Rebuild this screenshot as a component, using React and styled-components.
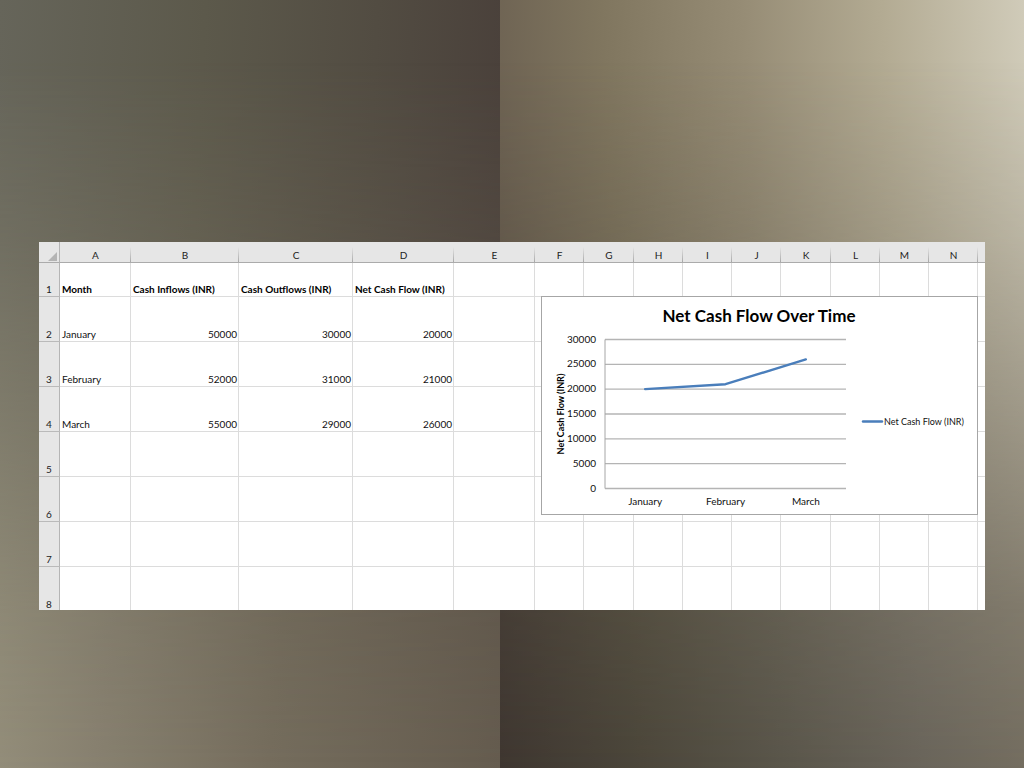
import React from "react";
import styled, { createGlobalStyle } from "styled-components";

const GlobalStyle = createGlobalStyle`
  body {
    margin: 0;
    font-family: Lato, "Liberation Sans", sans-serif;
  }
`;

const Page = styled.main`
  position: relative;
  isolation: isolate;
  box-sizing: border-box;
  min-height: 100vh;
  padding: 242px 39px 158px;
  background-image:
    linear-gradient(93deg, #66655a, #5c594b 38%, #524c42 70%, #483e39),
    linear-gradient(
      87deg,
      #695e50,
      #80765f 25%,
      #968c75 50%,
      #b3ab93 75%,
      #d0cbb9
    );
  background-size: 500px 100%, calc(100% - 500px) 100%;
  background-repeat: no-repeat;
  background-position: left top, right top;

  /* lower part of the backdrop, faded in over the upper one */
  &::before {
    content: "";
    position: absolute;
    inset: 0;
    z-index: -1;
    background-image:
      linear-gradient(96deg, #9c9781, #888170 30%, #756d5d 60%, #655c4f),
      linear-gradient(
        87deg,
        #3e3630,
        #4b463a 25%,
        #59554a 50%,
        #69645a 75%,
        #777061
      );
    background-size: 500px 100%, calc(100% - 500px) 100%;
    background-repeat: no-repeat;
    background-position: left top, right top;
    mask-image: linear-gradient(
      to bottom,
      transparent 8%,
      rgba(0, 0, 0, 0.22) 31%,
      rgba(0, 0, 0, 0.85) 79%,
      #000 100%
    );
  }
`;

const Sheet = styled.section`
  position: relative;
  overflow: hidden;
  background: #fff;
`;

const Grid = styled.table`
  width: 100%;
  table-layout: fixed;
  border-collapse: separate;
  border-spacing: 0;
  font-size: 10px;
  line-height: 12px;
`;

const Column = styled.col`
  width: ${({ $width }) => ($width ? `${$width}px` : "auto")};
`;

const ColumnHead = styled.th`
  box-sizing: border-box;
  height: 21px;
  padding: 6px 0 0;
  border-bottom: 1px solid #ababab;
  background: linear-gradient(to bottom, #e6e6e6 25%, #a8a8a8) right top / 1px
    100% no-repeat #e6e6e6;
  color: #222;
  font-weight: 400;
  text-align: center;

  &:last-child {
    background: #e6e6e6;
  }
`;

const Corner = styled.td`
  box-sizing: border-box;
  height: 21px;
  padding: 9px 2px 0 9px;
  border-right: 1px solid #b5b5b5;
  border-bottom: 1px solid #ababab;
  background: #e6e6e6;

  svg {
    display: block;
  }
`;

const Row = styled.tr`
  height: ${({ $height }) => $height}px;

  &:last-child > * {
    padding-bottom: 0;
    border-bottom: none;
  }
`;

const RowHead = styled.th`
  padding: 0 0 1px;
  border-right: 1px solid #b5b5b5;
  border-bottom: 1px solid #bababa;
  background: #e6e6e6;
  color: #222;
  font-weight: 400;
  text-align: center;
  vertical-align: bottom;
`;

const Cell = styled.td`
  padding: 0 1px 1px 2px;
  border-right: 1px solid #dcdcdc;
  border-bottom: 1px solid #dcdcdc;
  color: ${({ $bold }) => ($bold ? "#000" : "#111")};
  font-weight: ${({ $bold }) => ($bold ? 700 : 400)};
  text-align: ${({ $number }) => ($number ? "right" : "left")};
  vertical-align: bottom;
  white-space: nowrap;

  &:last-child {
    border-right: none;
  }
`;

const ChartBox = styled.figure`
  position: absolute;
  top: 54px;
  left: 502px;
  box-sizing: border-box;
  width: 437px;
  height: 219px;
  margin: 0;
  border: 1px solid #a6a6a6;
  background: #fff;

  svg {
    display: block;
  }
`;

const ChartText = styled.text`
  fill: ${({ $bold }) => ($bold ? "#000" : "#111")};
  font-size: ${({ $size }) => $size || 10}px;
  font-weight: ${({ $bold }) => ($bold ? 700 : 400)};
`;

const columns = [
  { name: "A", width: 71 },
  { name: "B", width: 108 },
  { name: "C", width: 114 },
  { name: "D", width: 101 },
  { name: "E", width: 81 },
  { name: "F", width: 49 },
  { name: "G", width: 50 },
  { name: "H", width: 49 },
  { name: "I", width: 49 },
  { name: "J", width: 49 },
  { name: "K", width: 50 },
  { name: "L", width: 49 },
  { name: "M", width: 49 },
  { name: "N", width: 49 },
  { name: "" },
];

const rows = [
  ["Month", "Cash Inflows (INR)", "Cash Outflows (INR)", "Net Cash Flow (INR)"],
  ["January", 50000, 30000, 20000],
  ["February", 52000, 31000, 21000],
  ["March", 55000, 29000, 26000],
  [],
  [],
  [],
  [],
];

const ticks = [30000, 25000, 20000, 15000, 10000, 5000, 0];

const plot = { left: 63, right: 304, top: 42.5, bottom: 191.5 };

function yFor(value) {
  return plot.bottom - (value / 30000) * (plot.bottom - plot.top);
}

function rowHeight(index) {
  if (index === 0) return 34;
  return index === rows.length - 1 ? 43 : 45;
}

function CashFlowChart() {
  const months = rows.slice(1, 4);
  const step = (plot.right - plot.left) / months.length;
  const xFor = (i) => plot.left + step * (i + 0.5);
  const points = months.map((m, i) => `${xFor(i)},${yFor(m[3])}`).join(" ");

  return (
    <ChartBox>
      <svg width="435" height="217" viewBox="0 0 435 217">
        <ChartText x="217" y="25" $size={17} $bold textAnchor="middle">
          Net Cash Flow Over Time
        </ChartText>
        <ChartText
          transform="translate(22 117) rotate(-90)"
          $size={9}
          $bold
          textAnchor="middle"
        >
          Net Cash Flow (INR)
        </ChartText>
        {ticks.map((tick) => (
          <g key={tick}>
            <line
              x1={plot.left}
              x2={plot.right}
              y1={yFor(tick)}
              y2={yFor(tick)}
              stroke="#b4b4b4"
              strokeWidth="1.4"
            />
            <ChartText x="54" y={Math.round(yFor(tick)) + 3} textAnchor="end">
              {tick}
            </ChartText>
          </g>
        ))}
        <line
          x1={plot.left}
          x2={plot.left}
          y1={plot.top}
          y2={plot.bottom}
          stroke="#a6a6a6"
        />
        <polyline
          points={points}
          fill="none"
          stroke="#4a7ebb"
          strokeWidth="2.4"
          strokeLinecap="round"
          strokeLinejoin="round"
        />
        {months.map((m, i) => (
          <ChartText key={m[0]} x={xFor(i)} y="208" textAnchor="middle">
            {m[0]}
          </ChartText>
        ))}
        <line
          x1="321"
          x2="340"
          y1="124.5"
          y2="124.5"
          stroke="#4a7ebb"
          strokeWidth="2.4"
          strokeLinecap="round"
        />
        <ChartText x="342" y="128" $size={9}>
          Net Cash Flow (INR)
        </ChartText>
      </svg>
    </ChartBox>
  );
}

function App() {
  return (
    <Page>
      <GlobalStyle />
      <Sheet>
        <Grid>
          <colgroup>
            <Column $width={21} />
            {columns.map((col) => (
              <Column key={col.name} $width={col.width} />
            ))}
          </colgroup>
          <thead>
            <tr>
              <Corner>
                <svg width="9" height="9" viewBox="0 0 9 9">
                  <polygon points="9,0 9,9 0,9" fill="#b4b4b4" />
                </svg>
              </Corner>
              {columns.map((col) => (
                <ColumnHead key={col.name}>{col.name}</ColumnHead>
              ))}
            </tr>
          </thead>
          <tbody>
            {rows.map((row, r) => (
              <Row key={r} $height={rowHeight(r)}>
                <RowHead>{r + 1}</RowHead>
                {columns.map((col, c) => (
                  <Cell
                    key={col.name}
                    $bold={r === 0}
                    $number={typeof row[c] === "number"}
                  >
                    {row[c]}
                  </Cell>
                ))}
              </Row>
            ))}
          </tbody>
        </Grid>
        <CashFlowChart />
      </Sheet>
    </Page>
  );
}

export default App;
